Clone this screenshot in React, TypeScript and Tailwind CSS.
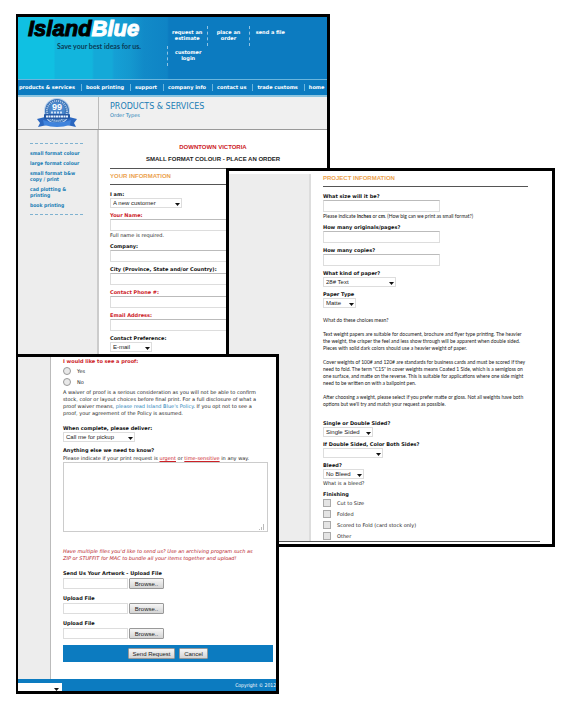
import React from "react";

type LabelProps = { htmlFor?: string; red?: boolean; children: React.ReactNode };

function FieldLabel({ htmlFor, red, children }: LabelProps) {
  return (
    <label htmlFor={htmlFor} className={`block font-bold leading-[8px] ${red ? "text-[#cc2127]" : "text-[#111]"}`}>
      {children}
    </label>
  );
}

function Arrow() {
  return (
    <svg viewBox="0 0 5 3" className="pointer-events-none absolute right-[2px] bottom-[2px] h-[3px] w-[5px]">
      <path d="M0 0H5L2.5 3Z" fill="#111" />
    </svg>
  );
}

type PickProps = { id: string; width: string; options: string[]; label?: string };

function Pick({ id, width, options, label }: PickProps) {
  return (
    <div className={`relative h-[10px] ${width}`}>
      <select
        id={id}
        aria-label={label}
        className="block h-full w-full appearance-none border border-[#ddd] bg-white pl-[2px] font-['Liberation_Sans',Arial,sans-serif] text-[6px] leading-[8px] text-[#222]"
      >
        {options.map((o) => (
          <option key={o}>{o}</option>
        ))}
      </select>
      <Arrow />
    </div>
  );
}

function TextField({ id, label, red, width }: { id: string; label: string; red?: boolean; width: string }) {
  return (
    <div>
      <FieldLabel htmlFor={id} red={red}>{label}</FieldLabel>
      <input id={id} type="text" className={`block h-[12px] border border-[#ddd] border-t-[#bbb] bg-white px-[2px] ${width}`} />
    </div>
  );
}

function Badge() {
  return (
    <svg viewBox="0 0 42 30" className="h-[30px] w-[42px]" role="img" aria-label="99 years anniversary">
      <path d="M1 21L9 19H33L41 21L38 25L40 29L31 27H11L2 29L4 25Z" fill="#2b67c0" />
      <circle cx="21" cy="13" r="13" fill="#b9d0ec" />
      <circle cx="21" cy="13" r="12" fill="#3c74b8" />
      <circle cx="21" cy="13" r="10" fill="none" stroke="#b5cde9" strokeWidth="2" strokeDasharray="1 1" />
      <circle cx="21" cy="12" r="8" fill="#4a87cc" />
      <text x="21" y="12" textAnchor="middle" fontSize="9" fontWeight="bold" fill="#fff" fontFamily="Liberation Sans, sans-serif">99</text>
      <path d="M15 14.500H27" stroke="#cfe0f5" strokeWidth="2" strokeDasharray="2 1" />
      <rect x="8" y="16" width="26" height="5" rx="1" fill="#2458a4" />
      <path d="M10 18.500H32" stroke="#e6f0fb" strokeWidth="2" strokeDasharray="2 .5" />
      <path d="M7 22Q21 27 35 22L34 27Q21 31 8 27Z" fill="#3f83dc" />
    </svg>
  );
}

const nav = ["products & services", "book printing", "support", "company info", "contact us", "trade customs", "home"];
const sideLinks = ["small format colour", "large format colour", "small format b&w copy / print", "cad plotting & printing", "book printing"];

function OrderWindow() {
  return (
    <section className="absolute left-[16px] top-[14px] h-[343px] w-[314px] overflow-hidden border-[3px] border-l-2 border-black bg-white">
      <header className="text-white">
        <div className="flex h-[62px] bg-[linear-gradient(90deg,#10c0e2_0px,#10c0e2_36px,#12b5dd_37px,#12b5dd_74px,#14a9d8_76px,#14a9d8_94px,#15a0d5_96px,#1498cf_112px,#118ac8_126px,#0f84c5_149px,#0c7bc0_151px)]">
          <div className="w-[149px] pl-[10px] pt-[1px]">
            <div className="font-['Liberation_Sans',Arial,sans-serif] text-[22px] leading-[22px] font-bold italic whitespace-nowrap">
              <span className="text-black [-webkit-text-stroke:1px_black]">Island</span>
              <span className="[-webkit-text-stroke:1px_white]">Blue</span>
            </div>
            <p className="w-[113px] text-right font-['Lato',sans-serif] text-[7px] leading-[12px] font-bold whitespace-nowrap text-[#0b3a55]">
              Save your best ideas for us.
            </p>
          </div>
          <div className="grid h-[49px] w-[124px] grid-cols-3 content-start pt-[9px] text-center font-bold leading-[6px]">
            <a href="#estimate" className="h-[20px] border-r border-dashed border-[#8fc3e4] pt-[3px]">request an<br />estimate</a>
            <a href="#order" className="h-[20px] border-r border-dashed border-[#8fc3e4] pt-[3px]">place an<br />order</a>
            <a href="#send" className="h-[20px] pt-[3px]">send a file</a>
            <a href="#login" className="h-[20px] border-l border-dashed border-[#8fc3e4] pt-[3px]">customer<br />login</a>
          </div>
        </div>
        <nav className="flex h-[18px] items-center overflow-hidden border-t border-b-2 border-t-[#6bb6de] border-b-[#8cc5e0] bg-[#0c7bc0] font-bold whitespace-nowrap">
          {nav.map((n, i) => (
            <a key={n} href="#nav" className={i ? "ml-[6px] border-l border-[#6bb6de] pl-[4px]" : "pl-px"}>{n}</a>
          ))}
        </nav>
      </header>
      <div className="flex h-[33px] border-b border-[#999] bg-[#f0f0f0]">
        <div className="flex w-[81px] justify-center border-r border-[#bbb] pt-[1px] pr-[3px]"><Badge /></div>
        <div className="pl-[11px] pt-[5px] text-[#1a7db5]">
          <h1 className="text-[8px] leading-[10px]">PRODUCTS &amp; SERVICES</h1>
          <p className="leading-[7px]">Order Types</p>
        </div>
      </div>
      <div className="flex h-[230px]">
        <aside className="w-[81px] border-r-2 border-[#ccc] bg-[#ededed] pl-[12px] pt-[13px]">
          <ul className="flex w-[53px] flex-col gap-[4px] border-y border-dashed border-[#7fb2d0] py-[6px] font-['DejaVu_Sans_Condensed','DejaVu_Sans',sans-serif] font-bold leading-[6px] text-[#1a7db5]">
            {sideLinks.map((s) => (
              <li key={s}><a href="#side">{s}</a></li>
            ))}
          </ul>
        </aside>
        <main className="flex-1 pl-[11px] pt-[11px]">
          <div className="-ml-[11px] text-center font-['Liberation_Sans',Arial,sans-serif] text-[6px] leading-[12px] font-bold">
            <h2 className="text-[#cc2127]">DOWNTOWN VICTORIA</h2>
            <h3 className="text-[#222]">SMALL FORMAT COLOUR - PLACE AN ORDER</h3>
          </div>
          <h3 className="mt-[3px] h-[17px] border-y border-[#555] font-['Liberation_Sans',Arial,sans-serif] text-[6px] leading-[15px] font-bold text-[#eca24d]">YOUR INFORMATION</h3>
          <form className="flex flex-col gap-[3px] pt-[5px]">
            <div>
              <FieldLabel htmlFor="iam">I am:</FieldLabel>
              <Pick id="iam" width="w-[72px]" options={["A new customer"]} />
            </div>
            <div>
              <TextField id="name" label="Your Name:" red width="w-[160px]" />
              <p className="leading-[8px]">Full name is required.</p>
            </div>
            <TextField id="company" label="Company:" width="w-[160px]" />
            <TextField id="city" label="City (Province, State and/or Country):" width="w-[160px]" />
            <TextField id="phone" label="Contact Phone #:" red width="w-[160px]" />
            <TextField id="email" label="Email Address:" red width="w-[160px]" />
            <div>
              <FieldLabel htmlFor="pref">Contact Preference:</FieldLabel>
              <Pick id="pref" width="w-[42px]" options={["E-mail"]} />
            </div>
          </form>
        </main>
      </div>
    </section>
  );
}

function ProjectWindow() {
  return (
    <section className="absolute left-[226px] top-[168px] flex h-[379px] w-[329px] overflow-hidden border-[3px] border-black bg-white">
      <div className="mt-[3px] mb-[3px] w-[82px] border-r-2 border-[#ddd] bg-[#ededed]" />
      <form className="flex-1 pl-[12px] pt-[1px]">
        <h3 className="h-[15px] w-[205px] border-b border-[#555] font-['Liberation_Sans',Arial,sans-serif] text-[6px] leading-[12px] font-bold text-[#eca24d]">PROJECT INFORMATION</h3>
        <div className="flex flex-col gap-[3px] pt-[5px]">
          <div>
            <TextField id="size" label="What size will it be?" width="w-[117px]" />
            <p className="font-['Lato',sans-serif] leading-[8px]">
              Please indicate <b>inches</b> or <b>cm</b>. (How big can we print as small format?)
            </p>
          </div>
          <TextField id="originals" label="How many originals/pages?" width="w-[117px]" />
          <TextField id="copies" label="How many copies?" width="w-[117px]" />
          <div>
            <FieldLabel htmlFor="paper">What kind of paper?</FieldLabel>
            <Pick id="paper" width="w-[73px]" options={["28# Text"]} />
          </div>
          <div>
            <FieldLabel htmlFor="ptype">Paper Type</FieldLabel>
            <Pick id="ptype" width="w-[33px]" options={["Matte"]} />
          </div>
        </div>
        <div className="flex flex-col gap-[7px] pt-[9px] font-['Lato',sans-serif] leading-[7px] whitespace-nowrap">
          <p>What do these choices mean?</p>
          <p>
            Text weight papers are suitable for document, brochure and flyer type printing. The heavier<br />
            the weight, the crisper the feel and less show through will be apparent when double sided.<br />
            Pieces with solid dark colors should use a heavier weight of paper.
          </p>
          <p>
            Cover weights of 100# and 120# are standards for business cards and must be scored if they<br />
            need to fold. The term "C1S" in cover weights means Coated 1 Side, which is a semigloss on<br />
            one surface, and matte on the reverse. This is suitable for applications where one side might<br />
            need to be written on with a ballpoint pen.
          </p>
          <p>
            After choosing a weight, please select if you prefer matte or gloss. Not all weights have both<br />
            options but we'll try and match your request as possible.
          </p>
        </div>
        <div className="flex flex-col gap-[3px] pt-[11px]">
          <div>
            <FieldLabel htmlFor="sided">Single or Double Sided?</FieldLabel>
            <Pick id="sided" width="w-[50px]" options={["Single Sided"]} />
          </div>
          <div>
            <FieldLabel htmlFor="both">If Double Sided, Color Both Sides?</FieldLabel>
            <Pick id="both" width="w-[60px]" options={[""]} />
          </div>
          <div>
            <FieldLabel htmlFor="bleed">Bleed?</FieldLabel>
            <Pick id="bleed" width="w-[41px]" options={["No Bleed"]} />
            <p className="leading-[8px]">What is a bleed?</p>
          </div>
          <fieldset>
            <legend className="font-bold leading-[8px] text-[#111]">Finishing</legend>
            <div className="flex flex-col gap-[3px] pt-px">
              {["Cut to Size", "Folded", "Scored to Fold (card stock only)", "Other"].map((t) => (
                <label key={t} className="flex h-[8px] items-center gap-[6px]">
                  <input type="checkbox" className="size-[8px] appearance-none border border-[#aaa] bg-[#e4e4e4]" />
                  {t}
                </label>
              ))}
            </div>
          </fieldset>
        </div>
        <hr className="-ml-[45px] mt-[1px] w-[262px] border-t border-[#555]" />
      </form>
    </section>
  );
}

const buttonLook =
  "h-[11px] rounded-[1px] border border-[#999] bg-linear-to-b from-[#f6f6f6] to-[#d4d4d4] text-center font-['Liberation_Sans',Arial,sans-serif] text-[6px] leading-[8px] text-[#222]";

function Upload({ id, label }: { id: string; label: string }) {
  return (
    <div>
      <FieldLabel htmlFor={id}>{label}</FieldLabel>
      <div className="flex gap-[1px] pt-px">
        <input id={id} type="text" className="h-[11px] w-[65px] border border-[#ddd] px-[2px]" />
        <button type="button" className={`w-[35px] ${buttonLook}`}>Browse..</button>
      </div>
    </div>
  );
}

function ProofWindow() {
  return (
    <section className="absolute left-[16px] top-[354px] flex h-[340px] w-[263px] flex-col overflow-hidden border-[3px] border-l-2 border-black bg-white">
      <div className="flex flex-1">
        <div className="w-[33px] border-r border-[#bbb] bg-[#ededed]" />
        <form className="flex-1 pl-[12px]">
          <fieldset className="pt-[2px]">
            <legend className="font-bold leading-[8px] text-[#cc2127]">I would like to see a proof:</legend>
            <div className="flex flex-col gap-[3px]">
              {["Yes", "No"].map((t) => (
                <label key={t} className="flex h-[8px] items-center gap-[6px]">
                  <input type="radio" name="proof" className="size-[8px] appearance-none rounded-full border border-[#999] bg-[#e8e8e8]" />
                  {t}
                </label>
              ))}
            </div>
          </fieldset>
          <p className="pt-[3px] leading-[7px] whitespace-nowrap">
            A waiver of proof is a serious consideration as you will not be able to confirm<br />
            stock, color or layout choices before final print. For a full disclosure of what a<br />
            proof waiver means, <a href="#policy" className="text-[#1f83b8]">please read Island Blue's Policy</a>. If you opt not to see a<br />
            proof, your agreement of the Policy is assumed.
          </p>
          <div className="pt-[7px]">
            <FieldLabel htmlFor="deliver">When complete, please deliver:</FieldLabel>
            <Pick id="deliver" width="w-[72px]" options={["Call me for pickup"]} />
          </div>
          <div className="pt-[4px]">
            <FieldLabel htmlFor="notes">Anything else we need to know?</FieldLabel>
            <p className="leading-[8px] whitespace-nowrap">
              Please indicate if your print request is <u className="text-[#cc2127]">urgent</u> or <u className="text-[#cc2127]">time-sensitive</u> in any way.
            </p>
            <div className="relative h-[70px] w-[205px]">
              <textarea id="notes" className="block h-full w-full resize-none border border-[#ccc] p-[2px]" />
              <svg viewBox="0 0 6 6" className="absolute right-[3px] bottom-[2px] size-[6px]">
                <path d="M.5 6V5M2.500 6V3M4.500 6V0" stroke="#bbb" />
              </svg>
            </div>
          </div>
          <p className="pt-[16px] leading-[7px] whitespace-nowrap text-[#b8232a] italic">
            Have multiple files you'd like to send us? Use an archiving program such as<br />
            ZIP or STUFFIT for MAC to bundle all your items together and upload!
          </p>
          <div className="flex flex-col gap-[5px] pt-[7px]">
            <Upload id="file1" label="Send Us Your Artwork - Upload File" />
            <Upload id="file2" label="Upload File" />
            <Upload id="file3" label="Upload File" />
          </div>
          <div className="mt-[6px] mr-[3px] flex h-[17px] items-center justify-center gap-[4px] bg-[#0c7bc0]">
            <button type="button" className={`w-[47px] ${buttonLook}`}>Send Request</button>
            <button type="button" className={`w-[29px] ${buttonLook}`}>Cancel</button>
          </div>
        </form>
      </div>
      <footer className="flex h-[12px] items-end justify-between overflow-hidden bg-[#0c7bc0] text-white">
        <div className="relative h-[8px] w-[44px]">
          <select aria-label="Quick links" className="block h-full w-full appearance-none bg-white" />
          <svg viewBox="0 0 5 3" className="pointer-events-none absolute right-[3px] bottom-0 h-[3px] w-[5px]">
            <path d="M0 0H5L2.500 3Z" fill="#111" />
          </svg>
        </div>
        <p className="self-center font-['DejaVu_Sans_Condensed','DejaVu_Sans',sans-serif] whitespace-nowrap">Copyright © 2012</p>
      </footer>
    </section>
  );
}

export default function App() {
  return (
    <div className="relative min-h-screen overflow-hidden bg-white font-['DejaVu_Sans',Verdana,sans-serif] text-[5px] leading-[7px] text-[#222]">
      <OrderWindow />
      <ProjectWindow />
      <ProofWindow />
    </div>
  );
}
